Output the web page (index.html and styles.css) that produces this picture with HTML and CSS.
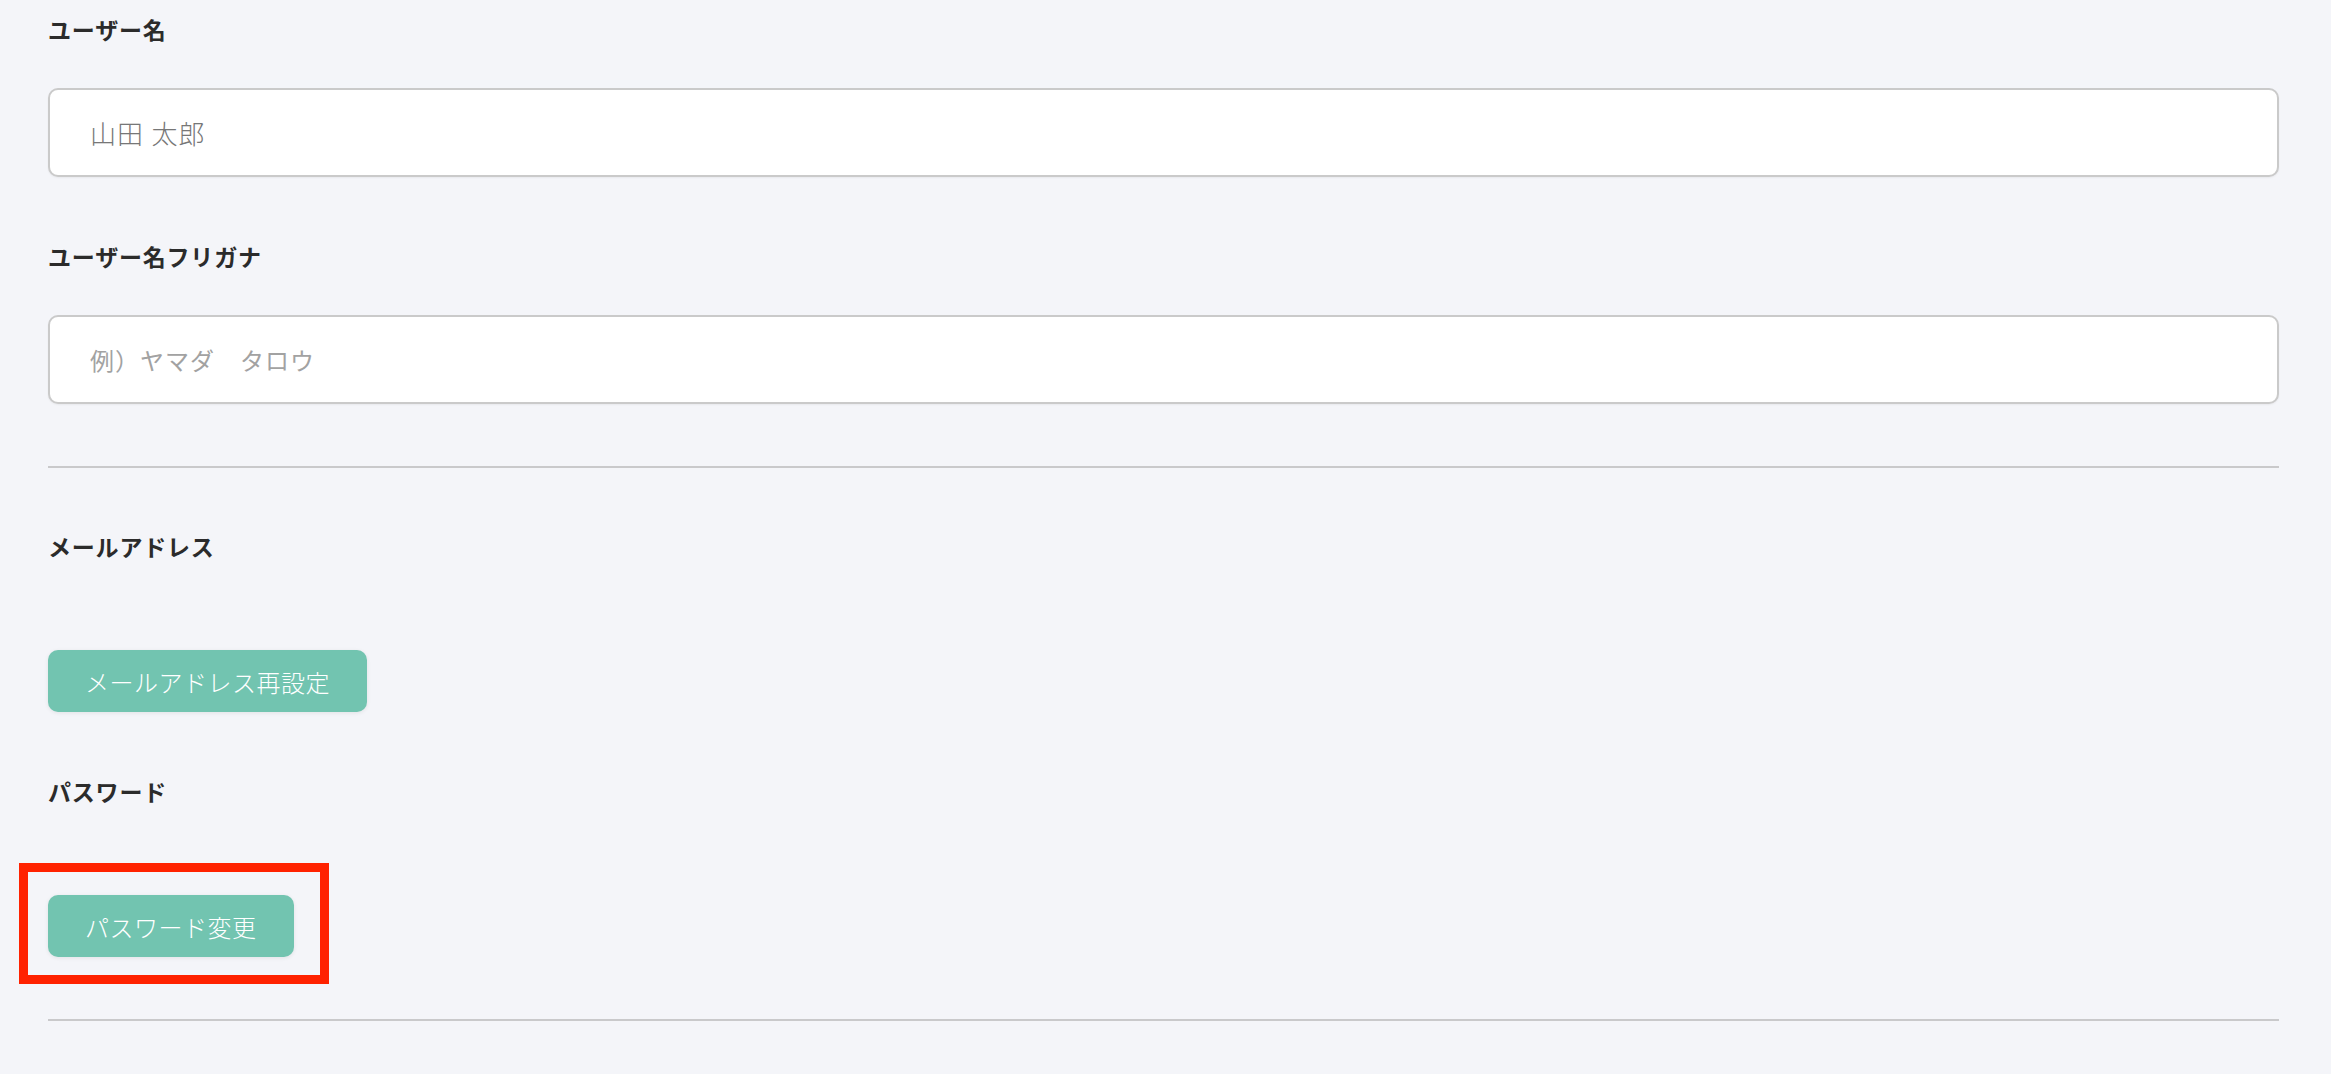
FILE: index.html
```html
<!DOCTYPE html>
<html lang="ja">
<head>
    <meta charset="UTF-8">
    <meta name="viewport" content="width=device-width, initial-scale=1.0">
    <title>アカウント設定</title>
    <link rel="stylesheet" href="styles.css">
</head>
<body>
    <div class="container">
        <div class="field">
            <label for="userName">ユーザー名</label>
            <input type="text" id="userName" class="text-input value-serif" value="山田 太郎">
        </div>

        <div class="field">
            <label for="userKana">ユーザー名フリガナ</label>
            <input type="text" id="userKana" class="text-input" placeholder="例）ヤマダ　タロウ">
        </div>

        <hr class="divider">

        <div class="field">
            <label>メールアドレス</label>
            <div class="action">
                <button class="btn">メールアドレス再設定</button>
            </div>
        </div>

        <div class="field">
            <label>パスワード</label>
            <div class="action">
                <div class="highlight">
                    <button class="btn">パスワード変更</button>
                </div>
            </div>
        </div>

        <hr class="divider">
    </div>
</body>
</html>
```

FILE: styles.css
```css
* {
    box-sizing: border-box;
}
body {
    margin: 0;
    background-color: #f4f5f9;
    font-family: "Noto Sans CJK JP", "Noto Sans", sans-serif;
    color: #333;
}
.container {
    padding: 12px 52px 0 48px;
}
.field {
    margin-bottom: 62px;
}
.field label {
    display: block;
    font-size: 23px;
    line-height: 34px;
    font-weight: 600;
    letter-spacing: 0.8px;
    color: #2b2b2b;
    margin-bottom: 42px;
}
.text-input {
    display: block;
    width: 100%;
    height: 89px;
    padding: 0 40px;
    border: 2px solid #cacaca;
    border-radius: 10px;
    background: #fff;
    font-family: "Noto Sans CJK JP", sans-serif;
    font-size: 24px;
    letter-spacing: 1px;
    color: #777;
    outline: none;
    box-shadow: 0 1px 2px rgba(0,0,0,0.05);
}
.text-input::placeholder {
    color: #a2a2a2;
}
.value-serif {
    font-family: "Liberation Serif", "Noto Sans CJK JP", serif;
    font-weight: 300;
    font-size: 26px;
}
.divider {
    border: none;
    height: 2px;
    background-color: #c9c9cb;
    margin: 0 0 61px;
}
.action {
    padding-top: 45px;
}
.btn {
    display: inline-block;
    height: 62px;
    padding: 0 37px;
    border: none;
    border-radius: 10px;
    background-color: #72c4b0;
    color: #fff;
    font-family: "Noto Sans CJK JP", sans-serif;
    font-size: 24px;
    font-weight: 300;
    letter-spacing: 0.5px;
    cursor: pointer;
    box-shadow: 0 1px 4px rgba(0,0,0,0.08);
}
.highlight {
    position: relative;
    display: inline-block;
    vertical-align: top;
}
.highlight .btn {
    display: block;
}
.highlight::after {
    content: "";
    position: absolute;
    left: -29px;
    top: -32px;
    right: -35px;
    bottom: -27px;
    border: 9px solid #ff2200;
    pointer-events: none;
}
```
